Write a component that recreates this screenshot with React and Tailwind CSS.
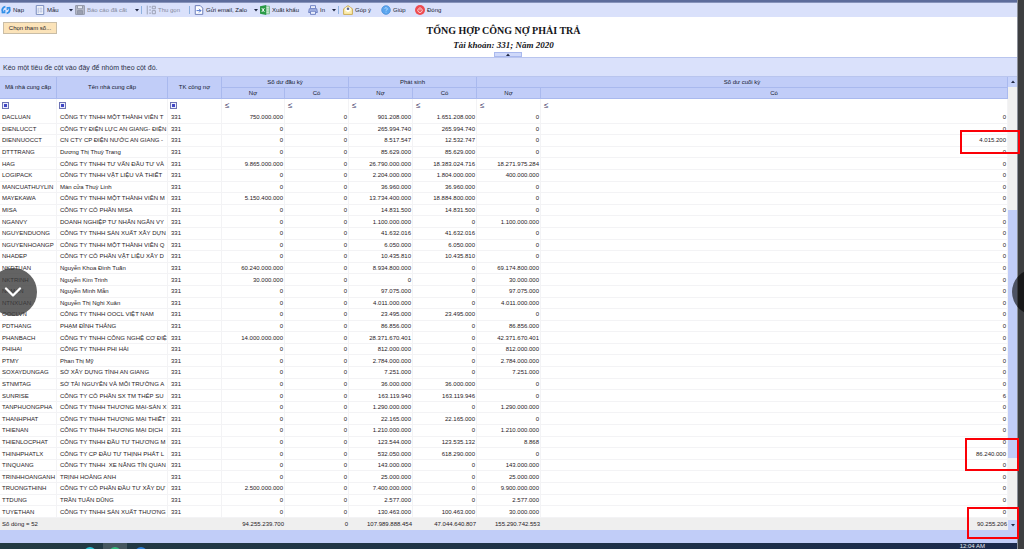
import { ChevronDown, Power } from 'lucide-react';

// code, name, opening debit, period debit, period credit, closing debit, closing credit
const ROWS = [
  ['DACLUAN', 'CÔNG TY TNHH MỘT THÀNH VIÊN T', '750.000.000', '901.208.000', '1.651.208.000', '0', '0'],
  ['DIENLUCCT', 'CÔNG TY ĐIỆN LỰC AN GIANG- ĐIỆN', '0', '265.994.740', '265.994.740', '0', '0'],
  ['DIENNUOCCT', 'CN CTY CP ĐIỆN NƯỚC AN GIANG -', '0', '8.517.547', '12.532.747', '0', '4.015.200'],
  ['DTTTRANG', 'Dương Thị Thuỳ Trang', '0', '85.629.000', '85.629.000', '0', '0'],
  ['HAG', 'CÔNG TY TNHH TƯ VẤN ĐẦU TƯ VÀ', '9.865.000.000', '26.790.000.000', '18.383.024.716', '18.271.975.284', '0'],
  ['LOGIPACK', 'CÔNG TY TNHH VẬT LIỆU VÀ THIẾT', '0', '2.204.000.000', '1.804.000.000', '400.000.000', '0'],
  ['MANCUATHUYLIN', 'Màn cửa Thuỳ Linh', '0', '36.960.000', '36.960.000', '0', '0'],
  ['MAYEKAWA', 'CÔNG TY TNHH MỘT THÀNH VIÊN M', '5.150.400.000', '13.734.400.000', '18.884.800.000', '0', '0'],
  ['MISA', 'CÔNG TY CỔ PHẦN MISA', '0', '14.831.500', '14.831.500', '0', '0'],
  ['NGANVY', 'DOANH NGHIỆP TƯ NHÂN NGÂN VY', '0', '1.100.000.000', '0', '1.100.000.000', '0'],
  ['NGUYENDUONG', 'CÔNG TY TNHH SẢN XUẤT XÂY DỰN', '0', '41.632.016', '41.632.016', '0', '0'],
  ['NGUYENHOANGP', 'CÔNG TY TNHH MỘT THÀNH VIÊN Q', '0', '6.050.000', '6.050.000', '0', '0'],
  ['NHADEP', 'CÔNG TY CỔ PHẦN VẬT LIỆU XÂY D', '0', '10.435.810', '10.435.810', '0', '0'],
  ['NKDTUAN', 'Nguyễn Khoa Đình Tuấn', '60.240.000.000', '8.934.800.000', '0', '69.174.800.000', '0'],
  ['NKTRINH', 'Nguyễn Kim Trinh', '30.000.000', '0', '0', '30.000.000', '0'],
  ['NKMAN', 'Nguyễn Minh Mẫn', '0', '97.075.000', '0', '97.075.000', '0'],
  ['NTNXUAN', 'Nguyễn Thị Nghi Xuân', '0', '4.011.000.000', '0', '4.011.000.000', '0'],
  ['OOCLVN', 'CÔNG TY TNHH OOCL VIỆT NAM', '0', '23.495.000', '23.495.000', '0', '0'],
  ['PDTHANG', 'PHẠM ĐÌNH THẮNG', '0', '86.856.000', '0', '86.856.000', '0'],
  ['PHANBACH', 'CÔNG TY TNHH CÔNG NGHỆ CƠ ĐIỆ', '14.000.000.000', '28.371.670.401', '0', '42.371.670.401', '0'],
  ['PHIHAI', 'CÔNG TY TNHH PHI HẢI', '0', '812.000.000', '0', '812.000.000', '0'],
  ['PTMY', 'Phan Thị Mỹ', '0', '2.784.000.000', '0', '2.784.000.000', '0'],
  ['SOXAYDUNGAG', 'SỞ XÂY DỰNG TỈNH AN GIANG', '0', '7.251.000', '0', '7.251.000', '0'],
  ['STNMTAG', 'SỞ TÀI NGUYÊN VÀ MÔI TRƯỜNG A', '0', '36.000.000', '36.000.000', '0', '0'],
  ['SUNRISE', 'CÔNG TY CỔ PHẦN SX TM THÉP SU', '0', '163.119.940', '163.119.946', '0', '6'],
  ['TANPHUONGPHA', 'CÔNG TY TNHH THƯƠNG MẠI-SẢN X', '0', '1.290.000.000', '0', '1.290.000.000', '0'],
  ['THANHPHAT', 'CÔNG TY TNHH THƯƠNG MẠI THIẾT', '0', '22.165.000', '22.165.000', '0', '0'],
  ['THIENAN', 'CÔNG TY TNHH THƯƠNG MẠI DỊCH', '0', '1.210.000.000', '0', '1.210.000.000', '0'],
  ['THIENLOCPHAT', 'CÔNG TY TNHH ĐẦU TƯ THƯƠNG M', '0', '123.544.000', '123.535.132', '8.868', '0'],
  ['THINHPHATLX', 'CÔNG TY CP ĐẦU TƯ THỊNH PHÁT L', '0', '532.050.000', '618.290.000', '0', '86.240.000'],
  ['TINQUANG', 'CÔNG TY TNHH  XE NÂNG TÍN QUAN', '0', '143.000.000', '0', '143.000.000', '0'],
  ['TRINHHOANGANH', 'TRỊNH HOÀNG ANH', '0', '25.000.000', '0', '25.000.000', '0'],
  ['TRUONGTHINH', 'CÔNG TY CỔ PHẦN ĐẦU TƯ XÂY DỰ', '2.500.000.000', '7.400.000.000', '0', '9.900.000.000', '0'],
  ['TTDUNG', 'TRẦN TUẤN DŨNG', '0', '2.577.000', '0', '2.577.000', '0'],
  ['TUYETHAN', 'CÔNG TY TNHH SẢN XUẤT THƯƠNG', '0', '130.463.000', '100.463.000', '30.000.000', '0'],
];

const TOTALS = ['94.255.239.700', '0', '107.989.888.454', '47.044.640.807', '155.290.742.553', '90.255.206'];

const HEAD = 'border-r border-b border-[#a9b9ee] bg-[#c1cdf8] p-0 text-center font-normal whitespace-nowrap';
const CELL = 'overflow-hidden border-r border-b border-[#f3f3f5] p-0 pt-px whitespace-pre';

function RefreshIcon() {
  return (
    <svg viewBox="0 0 16 16" className="size-2.5 shrink-0" fill="none" stroke="#2f8fe8" strokeWidth="3">
      <path d="M7 2.500A5.600 5.600 0 0 0 4 12.300" />
      <path d="M9 13.500A5.600 5.600 0 0 0 12 3.700" />
      <path d="M1 12h5V8M15 4h-5v4" strokeWidth="2" />
    </svg>
  );
}

function TemplateIcon() {
  return (
    <svg viewBox="0 0 16 16" className="size-2.5 shrink-0" fill="#fff" stroke="#6f83b8" strokeWidth="1.5">
      <path d="M2 1h12v14H2z" />
      <path d="M5 4v9M7 5h5M7 8h5M7 11h5" stroke="#9aabd8" />
    </svg>
  );
}

function SaveIcon() {
  return (
    <svg viewBox="0 0 16 16" className="size-2.5 shrink-0" fill="#b9bdca" stroke="#8f94a5" strokeWidth="1.5">
      <path d="M1 1h14v14H1z" />
      <path d="M4 1h8v5H4z" fill="#e6e9f2" />
      <path d="M4 9h8v6H4z" fill="#9ba0b0" />
    </svg>
  );
}

function CollapseIcon() {
  return (
    <svg viewBox="0 0 16 16" className="size-2.5 shrink-0" fill="none" stroke="#9a9fb2" strokeWidth="1.5">
      <path d="M2 1v14M5 3h3M5 8h3M5 13h3M10 2h5v4h-5zM10 9h5v5h-5z" />
    </svg>
  );
}

function SendIcon() {
  return (
    <svg viewBox="0 0 16 16" className="size-2.5 shrink-0" fill="#fff" stroke="#6677b5" strokeWidth="1.5">
      <path d="M2 1h8l4 4v10H2z" />
      <path d="M4 9h7M8 6l3 3-3 3" fill="none" stroke="#3f66c9" />
    </svg>
  );
}

function ExcelIcon() {
  return (
    <svg viewBox="0 0 16 16" className="size-2.5 shrink-0">
      <path d="M8 2h7v12H8z" fill="#fff" stroke="#35a04d" />
      <path d="M9 5h6M9 8h6M9 11h6" stroke="#35a04d" />
      <path d="M0 2l10-2v16L0 14z" fill="#2b9b47" />
      <path d="M3 5l4 6M7 5l-4 6" stroke="#fff" strokeWidth="1.5" />
    </svg>
  );
}

function PrintIcon() {
  return (
    <svg viewBox="0 0 16 16" className="size-2.5 shrink-0" fill="#e9edfb" stroke="#6d80c2" strokeWidth="1.5">
      <path d="M4 1h8v5H4z" />
      <path d="M2 6h12l1 6H1z" fill="#a9b7e6" />
      <path d="M4 10h8v5H4z" />
    </svg>
  );
}

function MailIcon() {
  return (
    <svg viewBox="0 0 16 16" className="size-2.5 shrink-0" fill="#fdeeb0" stroke="#c9a94b" strokeWidth="1.5">
      <path d="M1 6l7-5 7 5v9H1z" />
      <path d="M4 4h8v5l-4 2-4-2z" fill="#fff" stroke="none" />
      <path d="M6 6h4M8 4v4" stroke="#4a5a8a" strokeWidth="2" />
    </svg>
  );
}

function HelpIcon() {
  return (
    <svg viewBox="0 0 16 16" className="size-2.5 shrink-0">
      <circle cx="8" cy="8" r="7" fill="#5aa5ee" stroke="#3d86d6" />
      <path d="M6 6a2 2 0 1 1 3 2c-1 .5-1 1-1 2M8 12v1" fill="none" stroke="#b9dcff" strokeWidth="1.5" />
    </svg>
  );
}

function CloseIcon() {
  return (
    <span className="flex size-2.5 shrink-0 items-center justify-center rounded-full bg-[#ee4b50]">
      <Power className="size-1.5 text-white" strokeWidth={3} />
    </span>
  );
}

const TOOLS = [
  { icon: RefreshIcon, label: 'Nạp', width: 'w-8' },
  { icon: TemplateIcon, label: 'Mẫu', width: 'w-[38px]', menu: true },
  { icon: SaveIcon, label: 'Báo cáo đã cất', width: 'w-16', menu: true, off: true, line: true },
  { icon: CollapseIcon, label: 'Thu gọn', width: 'w-[41px]', off: true, line: true },
  { icon: SendIcon, label: 'Gửi email, Zalo', width: 'w-16', menu: true },
  { icon: ExcelIcon, label: 'Xuất khẩu', width: 'w-[46px]' },
  { icon: PrintIcon, label: 'In', width: 'w-7', menu: true, line: true },
  { icon: MailIcon, label: 'Góp ý', width: 'w-9' },
  { icon: HelpIcon, label: 'Giúp', width: 'w-8' },
  { icon: CloseIcon, label: 'Đóng', width: 'w-8' },
];

function Arrow({ up }) {
  return (
    <svg viewBox="0 0 8 8" className="size-1 shrink-0" fill="#1f2743">
      <path d={up ? 'M0 6l4-5 4 5z' : 'M0 2h8l-4 5z'} />
    </svg>
  );
}

function Toolbar() {
  return (
    <nav className="flex h-[14px] shrink-0 items-center gap-0.5 bg-[#dae1fb] pl-px text-[6px]">
      {TOOLS.map(({ icon: Icon, label, width, menu, off, line }) => (
        <div key={label} className="flex items-center">
          <button type="button" disabled={off} className={`flex items-center gap-0.5 whitespace-nowrap ${width} ${off ? 'text-[#858b9e]' : 'text-[#181d33]'}`}>
            <Icon />
            <span>{label}</span>
            {menu && <span className="ml-auto"><Arrow /></span>}
          </button>
          {line && <span className="mx-0.5 h-2 w-px bg-[#8fb2e0]" />}
        </div>
      ))}
    </nav>
  );
}

function FilterCell({ text }) {
  return (
    <td className="border-r border-[#f3f3f5] p-0 pl-0.5 align-middle">
      {text ? (
        <button type="button" aria-label="Lọc" className="flex size-[7px] items-center justify-center border border-[#6d73b4] bg-[#eceefb]">
          <span className="size-[3px] bg-[#4046c4]" />
        </button>
      ) : (
        <button type="button" aria-label="Lọc" className="block pl-px text-[8px] leading-[10px] text-[#33285a]">≤</button>
      )}
    </td>
  );
}

function DebtTable() {
  return (
    <table className="h-full w-full table-fixed border-separate border-spacing-0 text-[6px] leading-[9px] text-[#1f1a26]">
      <colgroup>
        <col className="w-[57px]" />
        <col className="w-[111px]" />
        <col className="w-[54px]" />
        <col className="w-[63px]" />
        <col className="w-[64px]" />
        <col className="w-[64px]" />
        <col className="w-[64px]" />
        <col className="w-[64px]" />
        <col />
      </colgroup>
      <thead className="text-[#151a30]">
        <tr className="h-[11px]">
          <th rowSpan={2} className={HEAD}>Mã nhà cung cấp</th>
          <th rowSpan={2} className={HEAD}>Tên nhà cung cấp</th>
          <th rowSpan={2} className={HEAD}>TK công nợ</th>
          <th colSpan={2} className={HEAD}>Số dư đầu kỳ</th>
          <th colSpan={2} className={HEAD}>Phát sinh</th>
          <th colSpan={2} className={HEAD}>Số dư cuối kỳ</th>
        </tr>
        <tr className="h-[11px]">
          {['Nợ', 'Có', 'Nợ', 'Có', 'Nợ', 'Có'].map((label, i) => (
            <th key={i} className={HEAD}>{label}</th>
          ))}
        </tr>
        <tr className="h-[13px]">
          {[true, true, true, false, false, false, false, false, false].map((text, i) => (
            <FilterCell key={i} text={text} />
          ))}
        </tr>
      </thead>
      <tbody>
        {ROWS.map(([code, name, openDebit, debit, credit, closeDebit, closeCredit]) => (
          <tr key={code}>
            <td className={`${CELL} pl-0.5`}>{code}</td>
            <td className={`${CELL} pl-[3px]`}>{name}</td>
            <td className={`${CELL} pl-[3px]`}>331</td>
            {[openDebit, '0', debit, credit, closeDebit, closeCredit].map((value, i) => (
              <td key={i} className={`${CELL} pr-px text-right`}>{value}</td>
            ))}
          </tr>
        ))}
      </tbody>
      <tfoot>
        <tr className="h-3 bg-[#efefef]">
          <td colSpan={3} className="p-0 pl-0.5">Số dòng = 52</td>
          {TOTALS.map((value, i) => (
            <td key={i} className="p-0 pr-px text-right">{value}</td>
          ))}
        </tr>
      </tfoot>
    </table>
  );
}

function ScrollBar() {
  return (
    <div className="flex w-[9px] shrink-0 flex-col bg-[#f0f0f0]">
      <button type="button" aria-label="Cuộn lên" className="flex h-[10px] items-center justify-center bg-[#c6d2fa]"><Arrow up /></button>
      <div className="flex-[123]" />
      <div className="flex-[249] bg-[#c1cdf8]" />
      <div className="flex-[62]" />
      <button type="button" aria-label="Cuộn xuống" className="flex h-[10px] items-center justify-center bg-[#c6d2fa]"><Arrow /></button>
    </div>
  );
}

export default function App() {
  return (
    <div className="relative flex h-screen overflow-hidden bg-[#3d3e40] pr-1.5 font-['Liberation_Sans',sans-serif]">
      <div className="flex min-w-0 flex-1 flex-col border-r border-[#8c9099] bg-white">
        <div className="h-[3px] shrink-0 border-b border-[#8793bb] bg-[#5d6c9b]" />
        <Toolbar />

        <header className="relative flex h-10 shrink-0 flex-col items-center pt-2 pr-2.5 font-['Liberation_Serif',serif] font-bold text-[#15151a]">
          <h1 className="text-[10px] leading-3">TỔNG HỢP CÔNG NỢ PHẢI TRẢ</h1>
          <p className="mt-0.5 text-[9px] leading-3 italic">Tài khoản: 331; Năm 2020</p>
          <button type="button" className="absolute top-[5px] left-[3px] h-3 w-[54px] border border-[#c9bda6] bg-[#fbe3b9] font-['Liberation_Sans',sans-serif] text-[6px] leading-[10px] font-normal whitespace-nowrap text-[#1c191d]">
            Chọn tham số...
          </button>
          <button type="button" aria-label="Thu gọn tiêu đề" className="mt-auto ml-2 flex h-[5px] w-7 shrink-0 items-center justify-center border border-[#a9b9ee] bg-[#cfd9fa]">
            <Arrow up />
          </button>
        </header>

        <div className="flex h-5 shrink-0 items-center border-y border-[#b9c5ee] bg-[#dae1fb] pt-0.5 pl-[3px] text-[7px] text-[#2a3048]">
          Kéo một tiêu đề cột vào đây để nhóm theo cột đó.
        </div>

        <main className="flex min-h-0 flex-1">
          <div className="min-w-0 flex-1">
            <DebtTable />
          </div>
          <ScrollBar />
        </main>

        <div className="h-[13px] shrink-0 bg-[#c1cdf8]" />
        <footer className="flex h-1.5 shrink-0 items-start overflow-hidden bg-linear-to-r from-[#233a42] to-[#1b2a4c] pr-8 pl-[84px]">
          <span className="mt-1 size-3 shrink-0 rounded-full bg-[#2fc4d6]" />
          <span className="ml-[7px] flex h-1.5 w-6 shrink-0 justify-center bg-[#46575f]">
            <span className="mt-1 size-3 shrink-0 rounded-full bg-[#35b97c]" />
          </span>
          <span className="mt-1 ml-2 size-3 shrink-0 rounded-full bg-[#2f7fd6]" />
          <span className="ml-auto text-[6px] leading-[6px] text-[#e6e9f0]">12:04 AM</span>
        </footer>
      </div>

      <button type="button" aria-label="Trước" className="absolute top-[268px] left-[-11px] flex size-12 items-center justify-center rounded-full bg-[#3c3c3c]/80 text-white">
        <ChevronDown className="size-7" strokeWidth={2} />
      </button>
      <button type="button" aria-label="Sau" className="absolute top-[269px] right-[-34px] size-[46px] rounded-full bg-black/60" />

      <div className="absolute top-[130px] right-[4px] h-6 w-[60px] border-2 border-[#fb0007]" />
      <div className="absolute top-[438px] right-[5px] h-[33px] w-[54px] border-2 border-[#fb0007]" />
      <div className="absolute top-[507px] right-[5px] h-8 w-[52px] border-2 border-[#fb0007]" />
    </div>
  );
}
